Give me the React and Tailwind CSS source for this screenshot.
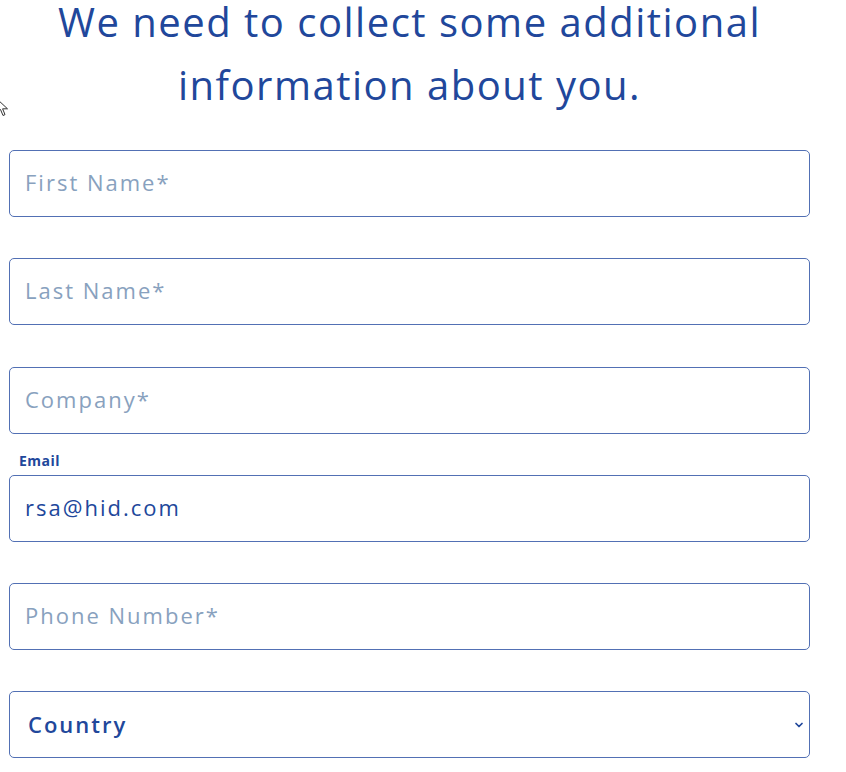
import { ChevronDown } from 'lucide-react';

const fields = [
  { name: 'firstName', placeholder: 'First Name*' },
  { name: 'lastName', placeholder: 'Last Name*' },
  { name: 'company', placeholder: 'Company*' },
  { name: 'email', label: 'Email', value: 'rsa@hid.com' },
  { name: 'phone', placeholder: 'Phone Number*' },
];

const inputClass =
  'w-full h-[67px] rounded-[5px] border border-[#5270b4] bg-white px-[15px] pb-[3px] text-[22px] tracking-[2px] font-medium text-[#21479b] placeholder:font-normal placeholder:text-[#88a1be] outline-none';

const App = () => {
  return (
    <div className="relative min-h-screen w-[846px] h-[772px] overflow-hidden bg-white font-['Open_Sans',sans-serif]">
      {/* cursor remnant at the left edge */}
      <svg className="absolute left-[-4px] top-[98px]" width="14" height="20" viewBox="0 0 14 20">
        <path d="M1 1 L1 15 L4.5 11.5 L7 17.5 L9 16.6 L6.6 10.8 L11.5 10.8 Z" fill="white" stroke="#333" strokeWidth="1" />
      </svg>

      <div className="w-[801px] ml-[9px]">
        <h1 className="text-center text-[40px] tracking-[1.5px] font-medium text-[#21479b]">
          <span className="block leading-[44px]">We need to collect some additional</span>
          <span className="block leading-[81px]">information about you.</span>
        </h1>

        <form className="mt-[25px] flex flex-col gap-[41.3px]">
          {fields.map((f) => (
            <div key={f.name} className="relative">
              {f.label && (
                <label className="absolute left-[10px] -top-[25px] text-[14px] tracking-[0.5px] font-bold text-[#21479b]">
                  {f.label}
                </label>
              )}
              <input
                type="text"
                name={f.name}
                placeholder={f.placeholder}
                defaultValue={f.value}
                className={inputClass}
              />
            </div>
          ))}

          <div className="relative">
            <select
              defaultValue=""
              className="w-full h-[67px] appearance-none rounded-[5px] border border-[#5270b4] bg-white pl-[18px] text-[22px] font-semibold tracking-[2px] text-[#21479b] outline-none"
            >
              <option value="">Country</option>
            </select>
            <ChevronDown className="pointer-events-none absolute right-[5px] top-[28px] w-[12px] h-[12px] text-[#21479b]" strokeWidth={3.5} />
          </div>
        </form>
      </div>
    </div>
  );
};

export default App;
